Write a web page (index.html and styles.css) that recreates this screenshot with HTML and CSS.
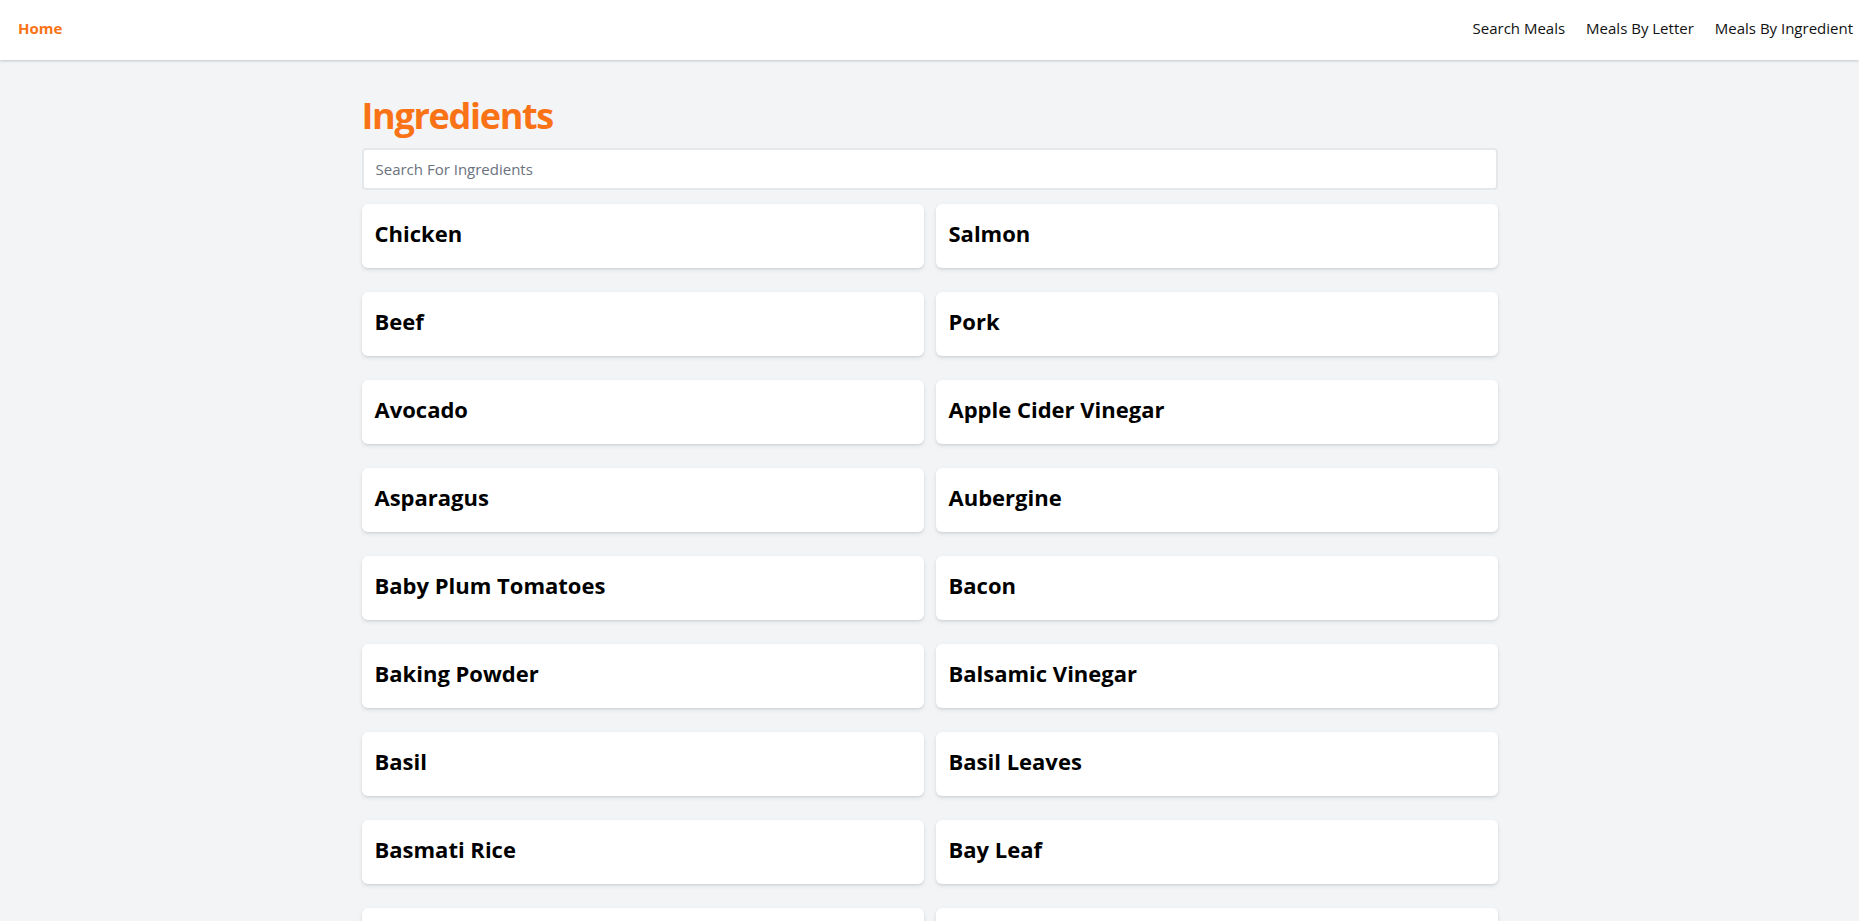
FILE: index.html
```html
<!DOCTYPE html>
<html lang="en">
<head>
<meta charset="utf-8">
<title>Ingredients</title>
<link rel="stylesheet" href="styles.css">
</head>
<body>
<header class="navbar">
  <a class="nav-home" href="#">Home</a>
  <nav class="nav-links">
    <a href="#">Search Meals</a>
    <a href="#">Meals By Letter</a>
    <a href="#">Meals By Ingredient</a>
  </nav>
</header>
<main class="container">
  <h1 class="page-title">Ingredients</h1>
  <input class="search" type="text" placeholder="Search For Ingredients">
  <div class="grid">
    <div class="card"><h3>Chicken</h3></div>
    <div class="card"><h3>Salmon</h3></div>
    <div class="card"><h3>Beef</h3></div>
    <div class="card"><h3>Pork</h3></div>
    <div class="card"><h3>Avocado</h3></div>
    <div class="card"><h3>Apple Cider Vinegar</h3></div>
    <div class="card"><h3>Asparagus</h3></div>
    <div class="card"><h3>Aubergine</h3></div>
    <div class="card"><h3>Baby Plum Tomatoes</h3></div>
    <div class="card"><h3>Bacon</h3></div>
    <div class="card"><h3>Baking Powder</h3></div>
    <div class="card"><h3>Balsamic Vinegar</h3></div>
    <div class="card"><h3>Basil</h3></div>
    <div class="card"><h3>Basil Leaves</h3></div>
    <div class="card"><h3>Basmati Rice</h3></div>
    <div class="card"><h3>Bay Leaf</h3></div>
    <div class="card"><h3>Bay Leaves</h3></div>
    <div class="card"><h3>Beef Brisket</h3></div>
    <div class="card"><h3>Beef Fillet</h3></div>
    <div class="card"><h3>Beef Gravy</h3></div>
  </div>
</main>
</body>
</html>
```

FILE: styles.css
```css
* { box-sizing: border-box; }
html, body { margin: 0; padding: 0; }
body {
  background: #f3f4f6;
  font-family: "Open Sans", "Noto Sans", sans-serif;
  color: #111827;
}
a { text-decoration: none; color: inherit; }

.navbar {
  height: 60px;
  background: #fff;
  box-shadow: 0 1px 3px rgba(0,0,0,0.12), 0 1px 2px rgba(0,0,0,0.08);
  display: flex;
  align-items: center;
  justify-content: space-between;
  padding: 0 6px 5px 18px;
}
.nav-home {
  color: #f97316;
  font-weight: 700;
  font-size: 15px;
}
.nav-links {
  display: flex;
  gap: 21px;
}
.nav-links a {
  font-size: 15px;
  color: #111;
}

.container {
  max-width: 1136px;
  margin: 0 auto;
  padding-top: 36px;
}
.page-title {
  margin: 0 0 12px;
  font-size: 36px;
  line-height: 40px;
  font-weight: 700;
  letter-spacing: -1.3px;
  color: #f97316;
}
.search {
  display: block;
  width: 100%;
  height: 42px;
  border: 2px solid #e5e7eb;
  border-radius: 4px;
  padding: 0 12px;
  font-family: inherit;
  font-size: 15px;
  background: #fff;
  outline: none;
}
.search::placeholder { color: #6b7280; }

.grid {
  margin-top: 14px;
  display: grid;
  grid-template-columns: 1fr 1fr;
  column-gap: 12px;
  row-gap: 24px;
}
.card {
  background: #fff;
  border-radius: 6px;
  box-shadow: 0 2px 4px rgba(0,0,0,0.1), 0 1px 2px rgba(0,0,0,0.06);
  height: 64px;
  padding: 0 13px 7px;
  display: flex;
  align-items: center;
}
.card h3 {
  margin: 0;
  font-size: 22px;
  line-height: 32px;
  font-weight: 700;
  color: #000;
}
```
